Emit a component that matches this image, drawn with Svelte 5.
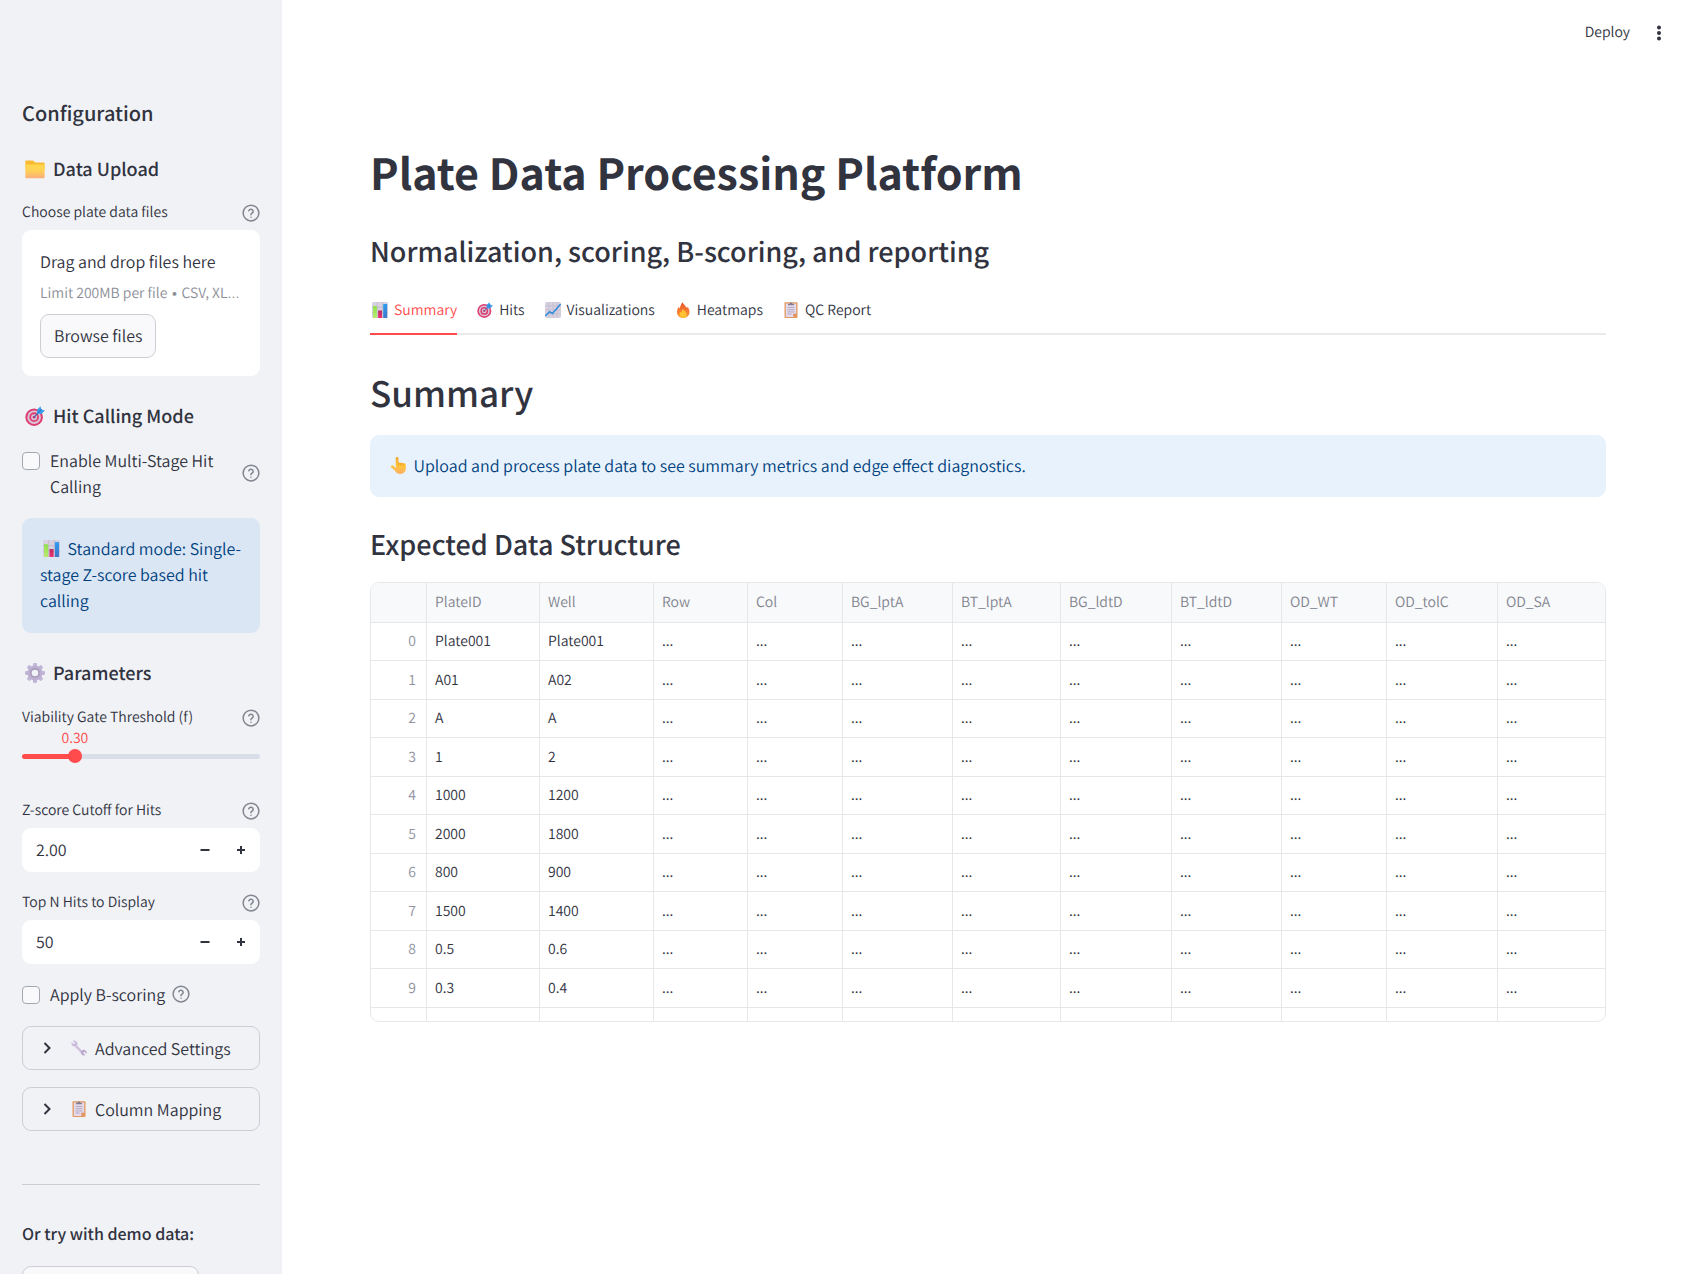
<script>
  const tabs = [
    { label: 'Summary', icon: 'chart' },
    { label: 'Hits', icon: 'target' },
    { label: 'Visualizations', icon: 'trend' },
    { label: 'Heatmaps', icon: 'flame' },
    { label: 'QC Report', icon: 'clipboard' }
  ];
  let activeTab = $state('Summary');

  const columns = [
    { name: 'PlateID', width: 113 },
    { name: 'Well', width: 114 },
    { name: 'Row', width: 94 },
    { name: 'Col', width: 95 },
    { name: 'BG_lptA', width: 110 },
    { name: 'BT_lptA', width: 108 },
    { name: 'BG_ldtD', width: 111 },
    { name: 'BT_ldtD', width: 110 },
    { name: 'OD_WT', width: 105 },
    { name: 'OD_tolC', width: 111 },
    { name: 'OD_SA', width: 107 }
  ];
  const totalWidth = 56 + columns.reduce((sum, c) => sum + c.width, 0);
  const share = (w) => `${((w / totalWidth) * 100).toFixed(3)}%`;

  const rows = [
    ['Plate001', 'Plate001'],
    ['A01', 'A02'],
    ['A', 'A'],
    ['1', '2'],
    ['1000', '1200'],
    ['2000', '1800'],
    ['800', '900'],
    ['1500', '1400'],
    ['0.5', '0.6'],
    ['0.3', '0.4']
  ];

  const gateMin = 0.1;
  const gateMax = 1;
  let gate = $state(0.3);
  let gatePercent = $derived(((gate - gateMin) / (gateMax - gateMin)) * 100);

  let cutoff = $state('2.00');
  let topN = $state('50');
  const stepCutoff = (d) => (cutoff = (Number(cutoff) + d).toFixed(2));
  const stepTopN = (d) => (topN = String(Number(topN) + d));
</script>

{#snippet icon(name)}
  <svg class="emoji" viewBox="0 0 16 16" aria-hidden="true">
    {#if name === 'chart'}
      <rect width="16" height="16" rx="1.5" fill="#d6d0e0" />
      <path d="M0 5.3h16M0 10.6h16M5.3 0v16M10.7 0v16" stroke="#b9b1c6" stroke-width=".6" />
      <path d="M1 4h3.9v12H1z" fill="url(#g-green)" />
      <path d="M6.1 8.5H10V16H6.1z" fill="url(#g-pink)" />
      <path d="M11.2 2h3.9v14h-3.9z" fill="url(#g-blue)" />
    {:else if name === 'target'}
      <circle cx="7.3" cy="8.9" r="7" fill="#df3f70" />
      <circle cx="7.3" cy="8.9" r="5.4" fill="#d9c8dc" />
      <circle cx="7.3" cy="8.9" r="3.9" fill="#df3f70" />
      <circle cx="7.3" cy="8.9" r="2.4" fill="#d9c8dc" />
      <circle cx="7.3" cy="8.9" r="1.1" fill="#c22f62" />
      <path d="M7.3 8.9 12 4.2" stroke="#4a6fae" stroke-width="1" />
      <path d="M9.800 6.200 9.500 3.300 12.300.2l.8 2.600L15.900 3.500 13 6.400z" fill="#3b9be8" />
      <path d="m10.300 5.500 3-3" stroke="#1f78cf" stroke-width=".8" />
    {:else if name === 'trend'}
      <rect width="16" height="16" rx="1.500" fill="#d6d0e0" />
      <path d="M0 4h16M0 8h16M0 12h16M4 0v16M8 0v16M12 0v16" stroke="#bdb5cb" stroke-width=".6" />
      <path d="m.8 13.500 3.700-3.800 3 1.800 7.700-9" fill="none" stroke="#2e8bdc" stroke-width="1.500" stroke-linejoin="round" stroke-linecap="round" />
    {:else if name === 'flame'}
      <path d="M7.200.2C9.300 2.700 11.200 4.800 12 6c.300-.400.400-.900.500-1.300C13.800 6.200 14.500 8 14.500 10c0 3.500-2.700 6-6.300 6s-6.200-2.400-6.200-6c0-2.300 1-3.900 1.900-5.300.300 1 .600 1.400 1 1.700C5 4.200 6 2.600 7.200.2z" fill="url(#g-fire)" />
      <path d="M8 7c.700 1.200 3.700 2.900 3.700 5.600 0 2-1.500 3.300-3.500 3.300s-3.600-1.400-3.600-3.300c0-1.300.6-2.200 1.200-3 .2.700.5 1 .9 1.200C6.500 9.300 7 8 8 7z" fill="#ffc233" />
    {:else if name === 'clipboard'}
      <rect x="1.500" y=".3" width="13" height="15.700" rx=".9" fill="#e5985e" />
      <path d="M2.800 1.600h10.400v10.200l-2.800 3.100H2.800z" fill="#e3d9eb" />
      <path d="M13.200 11.800h-2.800v3.100z" fill="#d98550" />
      <path d="M5 3.200V1.700h1.700a1.300 1.300 0 0 1 2.600 0H11v1.500z" fill="#837b8f" />
      <path d="M4.500 5.500h7M4.500 7.700h7M4.500 9.900h7M4.500 12h4" stroke="#a99fb5" stroke-width=".8" />
    {:else if name === 'folder'}
      <path d="M.3 2c0-.5.300-.8.800-.8H6c.5 0 .8.100 1.100.500l1 1h6.800c.5 0 .8.300.8.800V8H.3z" fill="#f9b931" />
      <path d="M.3 4.300h15.400v10.200c0 .5-.3.800-.8.800H1.100c-.5 0-.8-.3-.8-.8z" fill="url(#g-folder)" />
    {:else if name === 'gear'}
      <g fill="#c3b7d8">
        <rect x="6.400" y="0" width="3.200" height="16" rx="1" />
        <rect x="6.400" y="0" width="3.200" height="16" rx="1" transform="rotate(45 8 8)" />
        <rect x="6.400" y="0" width="3.200" height="16" rx="1" transform="rotate(90 8 8)" />
        <rect x="6.400" y="0" width="3.200" height="16" rx="1" transform="rotate(135 8 8)" />
      </g>
      <circle cx="8" cy="8" r="4.500" fill="#f0f2f6" stroke="#bdb0d3" stroke-width="3" />
      <circle cx="8" cy="8" r="3.300" fill="#f0f2f6" stroke="#a99eb8" stroke-width="1.300" />
    {:else if name === 'wrench'}
      <path d="M4.900 6.200 10.300 11.600" stroke="#cfc0dd" stroke-width="2.400" />
      <path d="M1.800.7 4.200 3 3 4.300.6 2.200C-.2 4.600 1.700 7 4.200 6.600L6.500 5C7 2.300 4.400-.2 1.800.7z" fill="#c9badb" />
      <path d="M14.300 15.300 12.200 13l1.200-1.200 2.300 2.100c.5-2.500-1.500-4.500-3.900-4L9.700 11.600c-.5 2.600 2 4.700 4.600 3.700z" fill="#bba9cb" />
    {:else if name === 'hand'}
      <path d="M5.400 1.300C5.400.5 6 0 6.700 0S8 .5 8 1.300v4.200c.5-.5 1.800-.5 2.200.3.700-.6 1.800-.4 2.200.4 1.200-.7 2.500 0 2.500 1.200v3.300c0 3.200-2 5.300-5.300 5.300-2.700 0-3.900-1-5-3.200L1.200 9.900C.7 9 .9 8.300 1.500 7.900c.7-.4 1.400-.2 1.900.5l2 2.100z" fill="url(#g-hand)" />
      <path d="M8 5.500v2.200M10.200 5.800v2M12.400 6.200v1.900" stroke="#e58b22" stroke-width=".6" stroke-linecap="round" />
    {/if}
  </svg>
{/snippet}

{#snippet help(about)}
  <button class="help" aria-label="Help: {about}">
    <svg viewBox="0 0 24 24" aria-hidden="true">
      <circle cx="12" cy="12" r="10.500" />
      <path d="M9.090 9a3 3 0 0 1 5.830 1c0 2-3 2.500-3 4.200M12 17.500h.01" />
    </svg>
  </button>
{/snippet}

{#snippet chevron()}
  <svg class="chevron" viewBox="0 0 12 12" aria-hidden="true"><path d="m3.500 1 5 5-5 5" /></svg>
{/snippet}

<svg class="defs" aria-hidden="true">
  <defs>
    <linearGradient id="g-green" x1="0" y1="0" x2="0" y2="1"><stop offset="0" stop-color="#8fe04c" /><stop offset="1" stop-color="#b9ea6e" /></linearGradient>
    <linearGradient id="g-pink" x1="0" y1="0" x2="0" y2="1"><stop offset="0" stop-color="#b92f62" /><stop offset="1" stop-color="#f0316f" /></linearGradient>
    <linearGradient id="g-blue" x1="0" y1="0" x2="0" y2="1"><stop offset="0" stop-color="#2f9cf0" /><stop offset="1" stop-color="#3f78c8" /></linearGradient>
    <linearGradient id="g-fire" x1="0" y1="0" x2="0" y2="1"><stop offset="0" stop-color="#e8532f" /><stop offset="1" stop-color="#ff9a2e" /></linearGradient>
    <linearGradient id="g-folder" x1="0" y1="0" x2="0" y2="1"><stop offset="0" stop-color="#ffd94d" /><stop offset=".5" stop-color="#ffcf58" /><stop offset="1" stop-color="#fcae79" /></linearGradient>
    <linearGradient id="g-hand" x1="0" y1="0" x2="0" y2="1"><stop offset="0" stop-color="#f3a52c" /><stop offset=".5" stop-color="#ffc63a" /><stop offset="1" stop-color="#fbae63" /></linearGradient>
  </defs>
</svg>

<div class="app">
  <aside class="sidebar">
    <h2>Configuration</h2>

    <h3>{@render icon('folder')}Data Upload</h3>
    <div class="label-row">
      <span>Choose plate data files</span>
      {@render help('plate data files')}
    </div>
    <section class="dropzone" aria-label="Choose plate data files">
      <p class="drop-title">Drag and drop files here</p>
      <p class="drop-limit">Limit 200MB per file <span class="mark">•</span> CSV, XL<span class="mark">…</span></p>
      <button class="button">Browse files</button>
    </section>

    <h3>{@render icon('target')}Hit Calling Mode</h3>
    <div class="check-row">
      <label><input type="checkbox" /><span>Enable Multi-Stage Hit Calling</span></label>
      {@render help('multi-stage hit calling')}
    </div>
    <div class="notice">{@render icon('chart')} Standard mode: Single-stage Z-score based hit calling</div>

    <h3>{@render icon('gear')}Parameters</h3>
    <div class="label-row">
      <label for="gate">Viability Gate Threshold (f)</label>
      {@render help('viability gate threshold')}
    </div>
    <div class="slider" style="--at: {gatePercent}%">
      <output class="slider-value" for="gate">{gate.toFixed(2)}</output>
      <input id="gate" type="range" min={gateMin} max={gateMax} step="0.05" bind:value={gate} />
    </div>

    <div class="label-row">
      <label for="cutoff">Z-score Cutoff for Hits</label>
      {@render help('Z-score cutoff')}
    </div>
    <div class="number">
      <input id="cutoff" type="text" inputmode="decimal" bind:value={cutoff} />
      <button aria-label="Decrease cutoff" onclick={() => stepCutoff(-0.1)}><svg viewBox="0 0 10 10"><path d="M.5 5h9" /></svg></button>
      <button aria-label="Increase cutoff" onclick={() => stepCutoff(0.1)}><svg viewBox="0 0 10 10"><path d="M1 5h8M5 1v8" /></svg></button>
    </div>

    <div class="label-row next">
      <label for="topn">Top N Hits to Display</label>
      {@render help('top N hits')}
    </div>
    <div class="number">
      <input id="topn" type="text" inputmode="numeric" bind:value={topN} />
      <button aria-label="Decrease hits" onclick={() => stepTopN(-1)}><svg viewBox="0 0 10 10"><path d="M.5 5h9" /></svg></button>
      <button aria-label="Increase hits" onclick={() => stepTopN(1)}><svg viewBox="0 0 10 10"><path d="M1 5h8M5 1v8" /></svg></button>
    </div>

    <div class="check-row compact">
      <label><input type="checkbox" /><span>Apply B-scoring</span></label>
      {@render help('B-scoring')}
    </div>

    <div class="expanders">
      <details><summary>{@render chevron()}{@render icon('wrench')}Advanced Settings</summary></details>
      <details><summary>{@render chevron()}{@render icon('clipboard')}Column Mapping</summary></details>
    </div>

    <hr />
    <p class="demo">Or try with demo data:</p>
    <button class="button demo-button" aria-label="Load demo data"></button>
  </aside>

  <div class="page">
    <header>
      <button class="deploy">Deploy</button>
      <button class="menu" aria-label="Main menu">
        <svg viewBox="0 0 18 18" aria-hidden="true"><circle cx="9" cy="3.500" r="2" /><circle cx="9" cy="9" r="2" /><circle cx="9" cy="14.500" r="2" /></svg>
      </button>
    </header>

    <main>
      <h1>Plate Data Processing Platform</h1>
      <h3 class="subtitle">Normalization, scoring, B-scoring, and reporting</h3>

      <div class="tabs" role="tablist">
        {#each tabs as tab}
          <button role="tab" aria-selected={activeTab === tab.label} onclick={() => (activeTab = tab.label)}>
            {@render icon(tab.icon)}{tab.label}
          </button>
        {/each}
      </div>

      <h2 class="section">Summary</h2>
      <div class="notice">{@render icon('hand')} Upload and process plate data to see summary metrics and edge effect diagnostics.</div>

      <h3 class="subtitle structure">Expected Data Structure</h3>
      <div class="frame">
        <table>
          <colgroup>
            <col style="width: {share(56)}" />
            {#each columns as c}<col style="width: {share(c.width)}" />{/each}
          </colgroup>
          <thead>
            <tr><td></td>{#each columns as c}<th scope="col">{c.name}</th>{/each}</tr>
          </thead>
          <tbody>
            {#each rows as row, i}
              <tr>
                <th scope="row">{i}</th>
                {#each columns as _, c}<td>{row[c] ?? '...'}</td>{/each}
              </tr>
            {/each}
            <tr class="cut"><th></th>{#each columns as _}<td></td>{/each}</tr>
          </tbody>
        </table>
      </div>
    </main>
  </div>
</div>

<style>
  :global(body) {
    background: #fff;
  }
  .app {
    --text: #31333f;
    --line: #cdced4;
    --accent: #ff4b4b;
    display: flex;
    min-height: 100vh;
    color: var(--text);
    font: 350 16px/26px 'Noto Sans CJK SC', 'Noto Sans', sans-serif;
    text-rendering: geometricPrecision;
  }
  .app :is(h1, h2, h3, p) {
    margin: 0;
  }
  .defs {
    position: absolute;
    width: 0;
    height: 0;
  }
  button,
  input {
    font: inherit;
    color: inherit;
    text-rendering: inherit;
  }
  button {
    border: 0;
    padding: 0;
    background: none;
    cursor: pointer;
  }
  .emoji {
    width: 16px;
    height: 16px;
    flex: none;
  }

  /* Sidebar */
  .sidebar {
    box-sizing: border-box;
    flex: none;
    position: sticky;
    top: 0;
    width: 282px;
    height: 100vh;
    overflow-y: auto;
    scrollbar-width: none;
    padding: 100px 22px 22px;
    background: #f0f2f6;
  }
  .sidebar h2 {
    font-size: 20px;
    font-weight: 500;
  }
  .app .sidebar h3 {
    display: flex;
    align-items: center;
    gap: 8px;
    margin: 28px 0 22px;
    padding-left: 3px;
    font-size: 18px;
    line-height: 24px;
    font-weight: 500;
  }
  .app .sidebar h2 + h3 {
    margin: 31px 0 21px;
  }
  .sidebar h3 .emoji,
  .sidebar h3 :global(svg) {
    width: 20px;
    height: 20px;
  }
  .label-row {
    display: flex;
    align-items: center;
    justify-content: space-between;
    font-size: 14px;
    line-height: 21px;
    margin-bottom: 7px;
  }
  .label-row.next {
    margin-top: 20px;
  }
  .help {
    display: flex;
    flex: none;
  }
  .help svg {
    width: 18px;
    height: 18px;
    fill: none;
    stroke: #83858f;
    stroke-width: 2;
    stroke-linecap: round;
    stroke-linejoin: round;
  }
  .dropzone {
    padding: 18px;
    border-radius: 9px;
    background: #fff;
  }
  .app .drop-limit {
    height: 20px;
    margin: 9px 0 11px;
    font-size: 14px;
    line-height: 20px;
    color: #8d8f98;
    white-space: nowrap;
  }
  .mark {
    font-family: Inter, sans-serif;
    line-height: 1;
  }
  .button {
    box-sizing: border-box;
    height: 44px;
    padding: 0 13px 2px;
    border: 1px solid var(--line);
    border-radius: 9px;
    background: #f9f9fb;
  }
  .dropzone .button {
    display: block;
  }
  .app .sidebar h3:has(+ .check-row) {
    margin-bottom: 19px;
  }
  .check-row {
    display: flex;
    align-items: center;
    gap: 7px;
    margin-bottom: 19px;
  }
  .check-row label {
    display: flex;
    gap: 10px;
    flex: 1;
  }
  .check-row.compact {
    margin-top: 17px;
  }
  .check-row.compact label {
    flex: none;
  }
  input[type='checkbox'] {
    appearance: none;
    flex: none;
    width: 18px;
    height: 18px;
    margin: 5px 0 0;
    border: 1px solid #a5a7af;
    border-radius: 4px;
    background: #f9f9fb;
  }
  input[type='checkbox']:checked {
    background: var(--accent);
    border-color: var(--accent);
  }
  .notice {
    padding: 17px 18px 19px;
    border-radius: 9px;
    background: #e8f2fc;
    color: #004280;
  }
  .notice .emoji {
    width: 17px;
    height: 17px;
    margin: 0 3px 0 2px;
    vertical-align: -2px;
  }
  .sidebar .notice {
    padding-bottom: 20px;
    background: #dbe6f4;
  }
  .sidebar .notice .emoji {
    margin: 0 4px 0 3px;
  }
  .slider {
    position: relative;
    height: 73px;
    margin-top: -8px;
    padding-top: 20px;
    box-sizing: border-box;
  }
  .slider-value {
    position: absolute;
    top: 1px;
    left: var(--at);
    transform: translateX(-50%);
    font-size: 14px;
    line-height: 20px;
    color: var(--accent);
  }
  .slider::before {
    content: '';
    display: block;
    height: 5px;
    margin-top: 7px;
    border-radius: 3px;
    background: linear-gradient(to right, var(--accent) var(--at), #d9dfe9 var(--at));
  }
  .slider input {
    appearance: none;
    display: block;
    position: relative;
    width: calc(100% + 14px);
    height: 14px;
    margin: -10px -7px 0;
    background: none;
  }
  .slider input::-webkit-slider-thumb {
    appearance: none;
    width: 14px;
    height: 14px;
    border-radius: 50%;
    background: var(--accent);
  }
  .number {
    display: flex;
    height: 44px;
    padding-right: 1px;
    border-radius: 9px;
    background: #fff;
  }
  .number input {
    flex: 1;
    min-width: 0;
    padding: 0 0 2px 14px;
    border: 0;
    background: none;
  }
  .number button {
    display: flex;
    align-items: center;
    justify-content: center;
    width: 36px;
  }
  .number svg {
    width: 10px;
    height: 10px;
    stroke: var(--text);
    stroke-width: 2;
  }
  .expanders {
    display: grid;
    gap: 17px;
  }
  summary {
    display: flex;
    align-items: center;
    box-sizing: border-box;
    height: 44px;
    padding-left: 18px;
    border: 1px solid var(--line);
    border-radius: 9px;
    cursor: pointer;
  }
  summary .emoji {
    margin: 0 8px 0 18px;
  }
  .chevron {
    width: 12px;
    height: 12px;
    fill: none;
    stroke: var(--text);
    stroke-width: 2;
  }
  hr {
    margin: 53px 0 35px;
    border: 0;
    border-top: 1px solid var(--line);
  }
  .demo {
    font-weight: 500;
  }
  .demo-button {
    width: 177px;
    margin-top: 20px;
  }

  /* Main column */
  .page {
    flex: 1;
    min-width: 0;
  }
  header {
    display: flex;
    align-items: center;
    justify-content: flex-end;
    gap: 20px;
    height: 66px;
    padding: 0 26px;
    box-sizing: border-box;
  }
  .deploy {
    font-size: 14px;
    line-height: 20px;
    margin-bottom: 2px;
  }
  .menu {
    display: flex;
  }
  .menu svg {
    width: 18px;
    height: 18px;
    fill: var(--text);
  }
  main {
    padding: 77px 88px 88px;
  }
  h1 {
    font-size: 43px;
    line-height: 58px;
    font-weight: 700;
  }
  .subtitle {
    padding-top: 31px;
    font-size: 27px;
    line-height: 38px;
    font-weight: 500;
  }
  .tabs {
    display: flex;
    gap: 18px;
    margin-top: 21px;
    box-shadow: inset 0 -2px #e9eaec;
  }
  .tabs button {
    display: flex;
    align-items: center;
    gap: 6px;
    padding: 9px 0 13px 2px;
    border-bottom: 2px solid transparent;
    font-size: 14px;
    line-height: 20px;
  }
  .tabs button[aria-selected='true'] {
    color: var(--accent);
    border-color: var(--accent);
  }
  .section {
    padding: 36px 0 20px;
    font-size: 35px;
    line-height: 44px;
    font-weight: 500;
  }
  .structure {
    padding: 28px 0 19px;
  }
  .frame {
    overflow: hidden;
    border: 1px solid #e6e7e9;
    border-radius: 9px;
  }
  table {
    width: 100%;
    table-layout: fixed;
    border-collapse: separate;
    border-spacing: 0;
    font-size: 14px;
    line-height: 20px;
  }
  th,
  td {
    box-sizing: border-box;
    height: 38px;
    padding: 0 8px 1px;
    border-right: 1px solid #e6e7e9;
    border-bottom: 1px solid #e6e7e9;
    text-align: left;
    font-weight: inherit;
    white-space: nowrap;
  }
  tr > :last-child {
    border-right: 0;
  }
  thead :is(th, td) {
    height: 40px;
    background: #f8f9fb;
    color: #83858f;
  }
  tbody th {
    padding-right: 10px;
    text-align: right;
    color: #9092a0;
  }
  tbody tr:nth-child(even) > * {
    height: 39px;
  }
  tbody .cut > * {
    height: 13px;
    border-bottom: 0;
  }
</style>
